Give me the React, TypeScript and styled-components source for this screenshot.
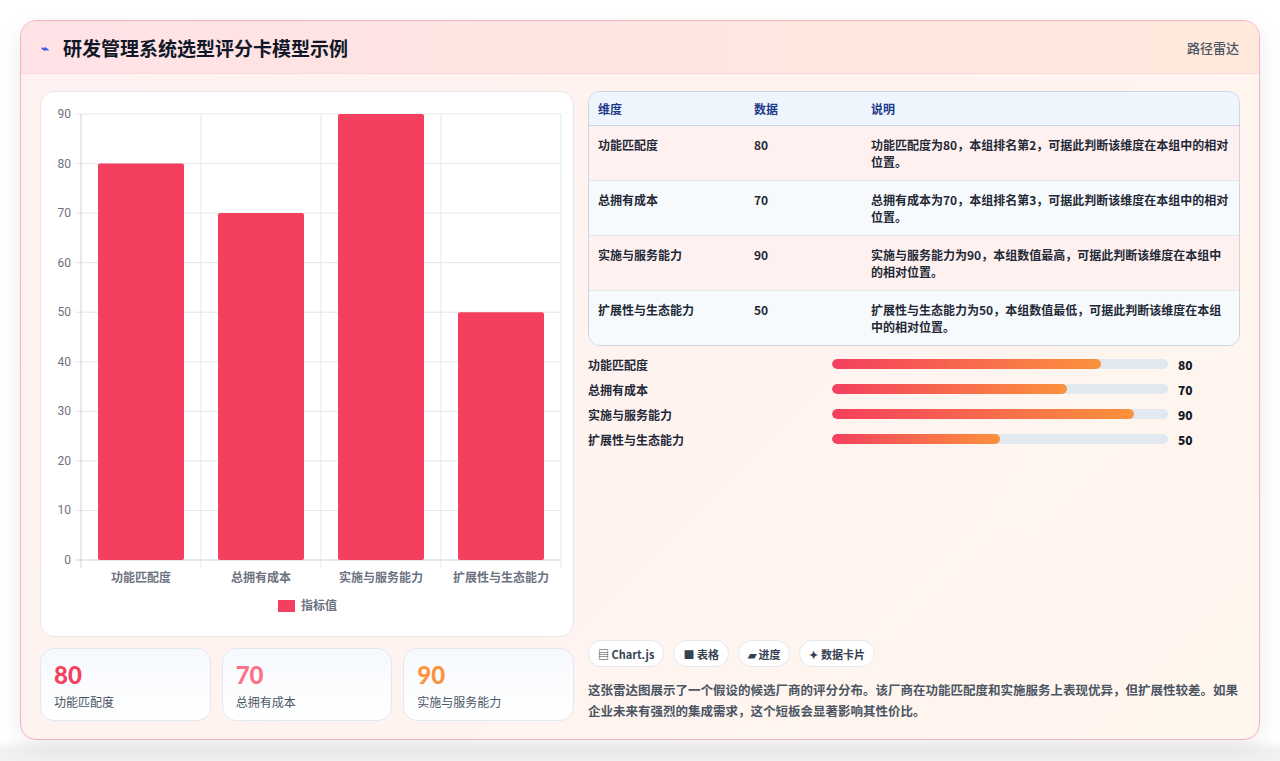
import React from "react";
import styled, { createGlobalStyle } from "styled-components";

const Global = createGlobalStyle`
  html, body { margin: 0; padding: 0; background: #f3f4f6; }
  body { font-family: "Noto Sans CJK SC", "Noto Sans", sans-serif; }
`;

const Page = styled.div`
  padding: 20px 20px 21px 20px;
  height: 761px;
  box-sizing: border-box;
  background: linear-gradient(#ffffff 0, #ffffff 740px, #f1f1f1 750px);
`;

const Card = styled.div`
  width: 1240px;
  height: 720px;
  box-sizing: border-box;
  border: 1px solid #f3b3bb;
  border-radius: 16px;
  overflow: hidden;
  background: linear-gradient(135deg, #fff1f1 0%, #fff6ee 100%);
  box-shadow: 0 8px 24px rgba(0, 0, 0, 0.08);
  display: flex;
  flex-direction: column;
`;

const Header = styled.div`
  height: 55px;
  box-sizing: border-box;
  display: flex;
  align-items: center;
  justify-content: space-between;
  padding: 0 20px 0 20px;
  background: linear-gradient(90deg, #ffe2e6 0%, #ffe9dc 100%);
  border-bottom: 1px solid #f5dcd9;
`;

const Title = styled.h1`
  margin: 0;
  font-size: 19px;
  font-weight: 700;
  color: #111827;
  display: flex;
  align-items: center;
  gap: 8px;
`;

const Bolt = styled.span`
  font-size: 13px;
  color: #3b5bdb;
  width: 14px;
`;

const HeaderTag = styled.span`
  font-size: 13px;
  color: #4b5563;
  font-weight: 500;
`;

const Body = styled.div`
  flex: 1;
  display: grid;
  grid-template-columns: 534px 652px;
  gap: 14px;
  padding: 17px 19px 18px 19px;
`;

const LeftCol = styled.div`
  display: flex;
  flex-direction: column;
  gap: 11px;
`;

const ChartCard = styled.div`
  height: 544px;
  background: #fff;
  border: 1px solid #e5e7eb;
  border-radius: 14px;
`;

const Stats = styled.div`
  display: grid;
  grid-template-columns: repeat(3, 1fr);
  gap: 11px;
`;

const Stat = styled.div`
  height: 73px;
  box-sizing: border-box;
  border: 1px solid #e2e8f0;
  border-radius: 14px;
  background: linear-gradient(#f6f9fd, #ffffff);
  padding: 12px 13px;
`;

const StatNum = styled.div<{ $c: string }>`
  font-family: "Lato", "Noto Sans", sans-serif;
  font-weight: 900;
  font-size: 24px;
  line-height: 28px;
  color: ${(p) => p.$c};
`;

const StatLabel = styled.div`
  font-size: 12px;
  color: #4b5563;
  margin-top: 4px;
`;

const RightCol = styled.div`
  display: flex;
  flex-direction: column;
`;

const Table = styled.div`
  border: 1px solid #cbd5e1;
  border-radius: 12px;
  overflow: hidden;
  font-size: 12px;
`;

const Row = styled.div<{ $bg: string; $head?: boolean }>`
  display: grid;
  grid-template-columns: 156px 117px 1fr;
  padding: ${(p) => (p.$head ? "8px 9px" : "10px 9px")};
  min-height: ${(p) => (p.$head ? "16px" : "33px")};
  background: ${(p) => p.$bg};
  color: ${(p) => (p.$head ? "#1e3a8a" : "#1f2937")};
  font-weight: 600;
  line-height: 17px;
  border-bottom: 1px solid ${(p) => (p.$head ? "#cbd5e1" : "#e5e7eb")};
  &:last-child { border-bottom: none; }
`;

const Bars = styled.div`
  margin-top: 9px;
  display: flex;
  flex-direction: column;
  gap: 7px;
`;

const BarRow = styled.div`
  display: grid;
  grid-template-columns: 244px 336px 1fr;
  align-items: center;
  gap: 0;
  font-size: 12px;
  height: 18px;
  color: #1f2937;
  font-weight: 600;
`;

const Track = styled.div`
  height: 10px;
  background: #e2e8f0;
  border-radius: 5px;
  overflow: hidden;
`;

const Fill = styled.div`
  height: 100%;
  border-radius: 5px;
  background: linear-gradient(90deg, #f43f5e, #fb923c);
`;

const BarVal = styled.span`
  padding-left: 10px;
  font-weight: 800;
  color: #111827;
`;

const Spacer = styled.div`
  flex: 1;
`;

const Chips = styled.div`
  display: flex;
  gap: 9px;
`;

const Chip = styled.span`
  height: 27px;
  box-sizing: border-box;
  padding: 0 9px;
  display: inline-flex;
  align-items: center;
  gap: 4px;
  border: 1px solid #e2e8f0;
  border-radius: 14px;
  background: #fff;
  font-size: 11px;
  font-weight: 700;
  color: #374151;
`;

const Para = styled.p`
  margin: 12px 0 0 0;
  font-size: 12.5px;
  line-height: 21px;
  color: #4b5563;
  font-weight: 600;
`;

const data = [
  { n: "功能匹配度", v: 80, d: "功能匹配度为80，本组排名第2，可据此判断该维度在本组中的相对位置。" },
  { n: "总拥有成本", v: 70, d: "总拥有成本为70，本组排名第3，可据此判断该维度在本组中的相对位置。" },
  { n: "实施与服务能力", v: 90, d: "实施与服务能力为90，本组数值最高，可据此判断该维度在本组中的相对位置。" },
  { n: "扩展性与生态能力", v: 50, d: "扩展性与生态能力为50，本组数值最低，可据此判断该维度在本组中的相对位置。" },
];

function Chart() {
  const x0 = 40, x1 = 520, y0 = 22, y1 = 468;
  const sy = (v: number) => y1 - ((y1 - y0) * v) / 90;
  const ticks = [0, 10, 20, 30, 40, 50, 60, 70, 80, 90];
  const cw = (x1 - x0) / 4;
  return (
    <svg width="532" height="542" style={{ display: "block" }}>
      {ticks.map((t) => (
        <g key={t}>
          <line x1={x0 - 6} x2={x1} y1={sy(t)} y2={sy(t)} stroke={t === 0 ? "#cbd5e1" : "#e5e7eb"} />
          <text x={x0 - 10} y={sy(t) + 4} textAnchor="end" fontSize="12" fill="#6b7280" fontFamily="Roboto, sans-serif">{t}</text>
        </g>
      ))}
      {[0, 1, 2, 3, 4].map((i) => (
        <line key={i} x1={x0 + i * cw} x2={x0 + i * cw} y1={y0} y2={y1 + 8} stroke={i === 0 ? "#cbd5e1" : "#e5e7eb"} />
      ))}
      {data.map((d, i) => (
        <g key={d.n}>
          <rect x={x0 + i * cw + 17} y={sy(d.v)} width={86} height={y1 - sy(d.v)} fill="#f43f5e" rx="2" />
          <text x={x0 + i * cw + cw / 2} y={y1 + 22} textAnchor="middle" fontSize="12" fontWeight="600" fill="#6b7280" fontFamily="'Noto Sans CJK SC', sans-serif">{d.n}</text>
        </g>
      ))}
      <rect x="237" y="508" width="17" height="12" fill="#f43f5e" />
      <text x="260" y="518" fontSize="12" fontWeight="600" fill="#6b7280" fontFamily="'Noto Sans CJK SC', sans-serif">指标值</text>
    </svg>
  );
}

export default function App() {
  return (
    <>
      <Global />
      <Page>
        <Card>
          <Header>
            <Title><Bolt>⌁</Bolt>研发管理系统选型评分卡模型示例</Title>
            <HeaderTag>路径雷达</HeaderTag>
          </Header>
          <Body>
            <LeftCol>
              <ChartCard><Chart /></ChartCard>
              <Stats>
                <Stat><StatNum $c="#f43f5e">80</StatNum><StatLabel>功能匹配度</StatLabel></Stat>
                <Stat><StatNum $c="#fb7185">70</StatNum><StatLabel>总拥有成本</StatLabel></Stat>
                <Stat><StatNum $c="#fb923c">90</StatNum><StatLabel>实施与服务能力</StatLabel></Stat>
              </Stats>
            </LeftCol>
            <RightCol>
              <Table>
                <Row $bg="#eef5fd" $head><span>维度</span><span>数据</span><span>说明</span></Row>
                {data.map((d, i) => (
                  <Row key={d.n} $bg={i % 2 === 0 ? "#fff1f0" : "#f7fafc"}>
                    <span>{d.n}</span><span>{d.v}</span><span>{d.d}</span>
                  </Row>
                ))}
              </Table>
              <Bars>
                {data.map((d) => (
                  <BarRow key={d.n}>
                    <span>{d.n}</span>
                    <Track><Fill style={{ width: `${d.v}%` }} /></Track>
                    <BarVal>{d.v}</BarVal>
                  </BarRow>
                ))}
              </Bars>
              <Spacer />
              <Chips>
                <Chip>▤ Chart.js</Chip>
                <Chip>■ 表格</Chip>
                <Chip>▰ 进度</Chip>
                <Chip>✦ 数据卡片</Chip>
              </Chips>
              <Para>这张雷达图展示了一个假设的候选厂商的评分分布。该厂商在功能匹配度和实施服务上表现优异，但扩展性较差。如果企业未来有强烈的集成需求，这个短板会显著影响其性价比。</Para>
            </RightCol>
          </Body>
        </Card>
      </Page>
    </>
  );
}
